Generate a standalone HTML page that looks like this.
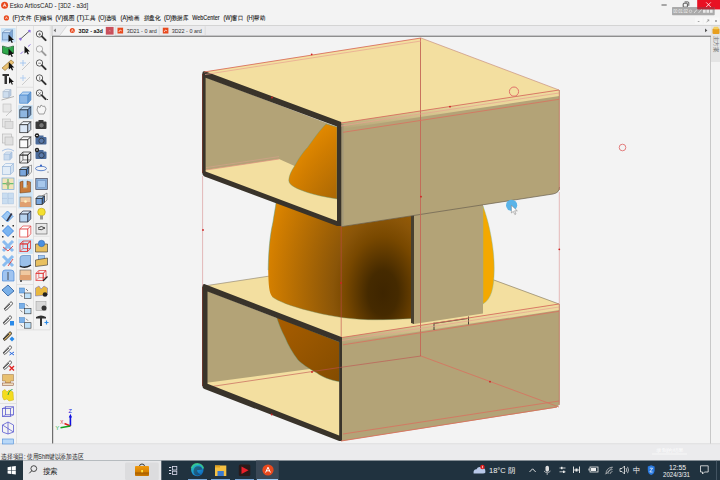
<!DOCTYPE html>
<html><head><meta charset="utf-8"><title>ArtiosCAD</title>
<style>
html,body{margin:0;padding:0;width:720px;height:480px;overflow:hidden;background:#F3F3F3;}
svg{position:absolute;left:0;top:0;font-family:"Liberation Sans",sans-serif;}
</style></head><body>
<svg width="720" height="480" viewBox="0 0 720 480">
<rect x="0" y="0" width="720" height="25" fill="#F3F3F3"/>
<rect x="0" y="25" width="720" height="1" fill="#D4D4D4"/>
<rect x="52" y="26" width="659" height="10" fill="#EBEBED"/>
<rect x="52" y="35" width="659" height="1" fill="#C4C4C6"/>
<rect x="52" y="36" width="659" height="1" fill="#8E8E8E"/>
<rect x="0" y="26" width="52" height="419" fill="#F3F3F3"/>
<rect x="53" y="37" width="657" height="407" fill="#F3F3F3"/>
<rect x="52" y="36" width="1.2" height="408" fill="#6E6E6E"/>
<rect x="710" y="37" width="1" height="407" fill="#C8C8C8"/>
<rect x="711" y="26" width="9" height="418" fill="#F3F3F3"/>
<rect x="711" y="26" width="9" height="36" fill="#E4E4E4"/>
<rect x="0" y="444" width="720" height="17" fill="#EBEBED"/>
<rect x="0" y="443.4" width="720" height="0.8" fill="#D9D9DB"/>
<text x="656" y="451.5" font-size="5" fill="#FFFFFF" opacity="0.9" textLength="28" lengthAdjust="spacingAndGlyphs">录制的结果</text>
<rect x="652" y="453.5" width="35" height="1" fill="#FFFFFF" opacity="0.6"/>
<rect x="0" y="460.5" width="720" height="19.5" fill="#20323F"/>
<defs>
<radialGradient id="egg" gradientUnits="userSpaceOnUse" cx="383" cy="293" r="125" gradientTransform="translate(383 293) scale(1 1.5) translate(-383 -293)">
<stop offset="0" stop-color="#3E2500"/>
<stop offset="0.12" stop-color="#452A00"/>
<stop offset="0.3" stop-color="#784800"/>
<stop offset="0.4" stop-color="#8A5508"/>
<stop offset="0.9" stop-color="#D27E00"/>
<stop offset="1" stop-color="#E08800"/>
</radialGradient>
<linearGradient id="egg4" gradientUnits="userSpaceOnUse" x1="276" y1="318" x2="339" y2="380"><stop offset="0" stop-color="#A85D00"/><stop offset="0.4" stop-color="#9A5700"/><stop offset="1" stop-color="#844C00"/></linearGradient>
<linearGradient id="topedge" x1="0" y1="0" x2="0" y2="1">
<stop offset="0" stop-color="#F3DFA0"/><stop offset="0.4" stop-color="#EBD89C"/><stop offset="1" stop-color="#B3A377"/>
</linearGradient>
</defs>
<polygon points="203,286 421,253 559.5,304 342,337.5" fill="#F3DFA0" />
<line x1="204" y1="286" x2="421" y2="253" stroke="#8A8070" stroke-width="0.6" />
<line x1="483" y1="276" x2="559" y2="304" stroke="#7A7060" stroke-width="0.6" />
<path d="M276.8,196 L341,220 L414,209 L414,318.5 C395,319.5 380,320 368,319.7 C345,319 325,315 310,311 C290,306 278,301 272.5,297 C269,293 268.5,285 268.2,270 C268.5,250 270,235 273,222 C274.5,212 276,205 276.5,199 Z" fill="url(#egg)" />
<path d="M268.2,270 C268.5,250 270,235 273,222 C274.5,212 276,205 276.5,199" fill="none" stroke="#5E9C84" stroke-width="0.5"/>
<path d="M272.5,297 C278,301 290,306 310,311 C325,315 345,319 368,319.7 C380,320 395,319.5 411,318.5" fill="none" stroke="#6E8A60" stroke-width="0.4"/>
<path d="M483,206 C490,225 494.5,250 494.2,270 C494,288 491.5,299 483,304 Z" fill="#F4A800" stroke="#7CB8A0" stroke-width="0.4"/>
<path d="M342,337.5 L559.5,304 L559.5,402 Q559.5,407.5 554,408 L342,441 Z" fill="#B3A377" />
<polygon points="342,337.5 559.5,304 559.5,310 342,343.5" fill="url(#topedge)" opacity="0.95"/>
<polygon points="205,290 339.5,342 339.5,437 205,384" fill="#B3A377" />
<polygon points="205,383 317,368 339.5,365 339.5,437 205,388" fill="#F3DFA0" />
<path d="M276.6,317 L339.5,342 L339.5,381.8 C330,380 322,377 317,373 C308,368 302,364 298,360 C292,352 288,345 285,337.5 C281,330 278.5,323 276.6,317 Z" fill="url(#egg4)" stroke="#5E9C84" stroke-width="0.4"/>
<line x1="205" y1="387.5" x2="339.5" y2="367.5" stroke="#C05050" stroke-width="0.6" />
<path d="M204.3,284 L342,337.3 L342,441 L339.2,441 L204.5,389 Q202.3,388 202.3,385.5 L202.3,287 Q202.3,284 204.3,284 Z M207.5,291.5 L207.5,383.8 L339.2,435.5 L339.2,342 Z" fill="#39332A" fill-rule="evenodd"/>
<polygon points="414,212 483,201 483,313.6 414,324" fill="#B3A377" />
<polygon points="411,213 414,212 414,324 411,323" fill="#48402F" />
<path d="M434,322.6 L434,330 M433.5,323.5 L467.5,318.5 M468.5,316.5 L468.5,324.5" stroke="#222" stroke-width="0.8" fill="none"/>
<polygon points="203,72 421,38 559,90 341,123" fill="#F3DFA0" />
<path d="M341,123 L559.5,90 L559.5,187 Q559.5,192.8 553,194 L341,226.7 Z" fill="#B3A377" />
<polygon points="341,123 559.5,90 559.5,96 341,129" fill="url(#topedge)" opacity="0.95"/>
<path d="M341,226.7 L553,194 Q559.5,192.8 559.5,187" fill="none" stroke="#6A6050" stroke-width="0.7"/>
<polygon points="341.3,124 343.6,124 343.6,226 341.3,226" fill="#A39878" />
<polygon points="205,77 337,127 337,221 205,172" fill="#B3A377" />
<polygon points="205,170 279,159 337,185 337,222 205,173" fill="#F3DFA0" />
<line x1="206" y1="170" x2="279" y2="159" stroke="#E09080" stroke-width="0.7" />
<line x1="206" y1="167.6" x2="279" y2="156.6" stroke="#E0A090" stroke-width="0.5" />
<path d="M326,124 L337,127 L337,199 C325,197 315,195 307.5,192.5 C298,189 289,186 288.8,180.4 C289,175 292,170 294.4,166.3 C300,156 305,150 307.5,147.5 C315,137 320,130 326,124 Z" fill="url(#egg)" stroke="#5E9C84" stroke-width="0.4"/>
<path d="M204.3,71 L341.3,122 L341.3,226 L337,226 L204.5,176.5 Q202.3,175.5 202.3,173 L202.3,73.5 Q202.3,71 204.3,71 Z M205.6,77.8 L205.6,171.5 L337,221 L337,126.6 Z" fill="#39332A" fill-rule="evenodd"/>
<line x1="202.5" y1="287" x2="202.5" y2="386" stroke="#6A2A20" stroke-width="0.8" />
<line x1="202.5" y1="74" x2="202.5" y2="173" stroke="#6A2A20" stroke-width="0.8" />
<line x1="202.6" y1="176" x2="202.6" y2="286" stroke="#D89090" stroke-width="0.6" />
<line x1="341.2" y1="226" x2="341.2" y2="337" stroke="#C04848" stroke-width="0.6" />
<line x1="420.5" y1="38" x2="420.5" y2="356" stroke="#C46656" stroke-width="0.9" />
<line x1="559.3" y1="192" x2="559.3" y2="304" stroke="#D89090" stroke-width="0.6" />
<line x1="204" y1="72" x2="421" y2="38" stroke="#D9705E" stroke-width="0.9" />
<line x1="205" y1="74.5" x2="421" y2="41" stroke="#E8A090" stroke-width="0.7" />
<line x1="341" y1="123" x2="559" y2="90" stroke="#D9705E" stroke-width="0.9" />
<line x1="341" y1="126" x2="559" y2="93" stroke="#E8A090" stroke-width="0.7" />
<line x1="343" y1="132.3" x2="559" y2="99.3" stroke="#D9705E" stroke-width="0.8" />
<line x1="421" y1="38" x2="559" y2="90" stroke="#C89080" stroke-width="0.7" />
<line x1="559.3" y1="90" x2="559.3" y2="190" stroke="#C07060" stroke-width="0.8" />
<line x1="342" y1="337.5" x2="559" y2="304" stroke="#D9705E" stroke-width="0.9" />
<line x1="342" y1="340.5" x2="559" y2="307" stroke="#E8A090" stroke-width="0.7" />
<line x1="343" y1="344.8" x2="559" y2="311.3" stroke="#D9705E" stroke-width="0.8" />
<line x1="343" y1="434" x2="559" y2="401" stroke="#D9705E" stroke-width="0.8" />
<line x1="341" y1="441" x2="557" y2="407" stroke="#D9705E" stroke-width="0.9" />
<line x1="421" y1="356" x2="559" y2="407" stroke="#D9705E" stroke-width="0.8" />
<line x1="339.5" y1="367.5" x2="421" y2="356" stroke="#C05050" stroke-width="0.6" />
<line x1="559.3" y1="304" x2="559.3" y2="405" stroke="#C07060" stroke-width="0.8" />
<circle cx="272" cy="97.5" r="0.9" fill="#D02020"/>
<circle cx="311.7" cy="54.3" r="0.9" fill="#D02020"/>
<circle cx="450" cy="106.7" r="0.9" fill="#D02020"/>
<circle cx="421" cy="196.7" r="0.9" fill="#D02020"/>
<circle cx="559.3" cy="249.3" r="0.9" fill="#D02020"/>
<circle cx="203" cy="230" r="0.9" fill="#D02020"/>
<circle cx="341" cy="283" r="0.9" fill="#D02020"/>
<circle cx="312" cy="372" r="0.9" fill="#D02020"/>
<circle cx="490" cy="381.7" r="0.9" fill="#D02020"/>
<circle cx="271.7" cy="414.5" r="0.9" fill="#D02020"/>
<circle cx="514" cy="91.6" r="4.6" fill="none" stroke="#E0706A" stroke-width="1"/>
<circle cx="622.5" cy="147.5" r="3.3" fill="none" stroke="#E07070" stroke-width="0.9"/>
<circle cx="511.6" cy="205.3" r="5.6" fill="#5BB4E8"/>
<path d="M511.4,205.3 L511.4,213 L513.3,211.3 L514.8,214.5 L516,214 L514.6,210.8 L517.3,210.8 Z" fill="#FFFFFF" stroke="#777" stroke-width="0.5"/>
<path d="M70.4,426 L70.4,416" stroke="#1010E0" stroke-width="1.6"/><path d="M68.8,417.5 L70.4,413.8 L72,417.5 Z" fill="#1010E0"/>
<path d="M70.4,426 L64.5,423.5" stroke="#E02020" stroke-width="1.6"/>
<path d="M70.4,426 L60.5,427.8" stroke="#10A020" stroke-width="1.6"/>
<text x="70.2" y="413.2" font-size="5.5" fill="#2020E0" text-anchor="middle">Z</text>
<text x="61.8" y="424.3" font-size="5" fill="#E04040" text-anchor="middle">X</text>
<text x="57.3" y="430.3" font-size="5.5" fill="#20B040" text-anchor="middle">Y</text>
<circle cx="4.6" cy="5.3" r="3.5" fill="#E8491D"/>
<path d="M3.2,6.8 L4.6,3.6 L6,6.8 M3.8,5.6 L5.4,5.6" stroke="#fff" stroke-width="0.8" fill="none"/>
<text x="9.7" y="8.1" font-size="7" fill="#1E1E1E" font-weight="normal" text-anchor="start" textLength="78.5" lengthAdjust="spacingAndGlyphs" >Esko ArtiosCAD - [3D2 - a3d]</text>
<rect x="661.5" y="4.6" width="5.2" height="0.8" fill="#333"/>
<rect x="683.2" y="3.2" width="4.2" height="4" rx="0.8" fill="none" stroke="#222" stroke-width="0.75"/>
<path d="M684.6,1.9 L687.8,1.9 Q688.8,1.9 688.8,2.9 L688.8,5.8" fill="none" stroke="#222" stroke-width="0.7"/>
<rect x="697.2" y="0" width="22.8" height="9.4" fill="#E81123"/>
<path d="M706.2,2.4 L710.8,7 M710.8,2.4 L706.2,7" stroke="#fff" stroke-width="0.8"/>
<rect x="672" y="7" width="42.7" height="8.3" rx="0.8" fill="#A4A4A4" opacity="0.92"/>
<rect x="697.2" y="7" width="17.5" height="2.4" fill="#B81828" opacity="0.85"/>
<text x="673.3" y="13.2" font-size="4.6" fill="#F4F4F4" font-weight="normal" text-anchor="start" textLength="14.5" lengthAdjust="spacingAndGlyphs" >00:01:02</text>
<circle cx="690.5" cy="11.3" r="1.3" fill="none" stroke="#F4F4F4" stroke-width="0.5"/>
<path d="M694,13 L697,9.5 M698.5,13 L701.5,9.5" stroke="#F4F4F4" stroke-width="0.7"/>
<rect x="703" y="9.8" width="2.6" height="3" fill="#E8E8E8"/><rect x="706.5" y="9.8" width="2.6" height="3" fill="#E8E8E8"/><rect x="710" y="9.8" width="2.6" height="3" fill="#E8E8E8"/>
<rect x="695" y="17.6" width="7.5" height="6.4" fill="#F7F7F7"/>
<rect x="704" y="17.6" width="7.5" height="6.4" fill="#F7F7F7"/>
<rect x="712" y="17.6" width="7.5" height="6.4" fill="#F7F7F7"/>
<rect x="697.8" y="21.3" width="1.6" height="0.5" fill="#555"/>
<path d="M706.6,22.3 L708.8,19.8 M707.3,19.8 L708.8,19.8 L708.8,21.3" stroke="#666" stroke-width="0.5" fill="none"/>
<path d="M715,20 L717,22 M717,20 L715,22" stroke="#666" stroke-width="0.5"/>
<circle cx="6.4" cy="17.9" r="2.6" fill="#E8491D"/>
<path d="M5.4,19 L6.4,16.8 L7.4,19" stroke="#fff" stroke-width="0.6" fill="none"/>
<text x="12.6" y="20.4" font-size="6.3" fill="#202020" font-weight="normal" text-anchor="start" textLength="18.5" lengthAdjust="spacingAndGlyphs" stroke="#202020" stroke-width="0.12">(F)文件</text>
<text x="34" y="20.4" font-size="6.3" fill="#202020" font-weight="normal" text-anchor="start" textLength="18" lengthAdjust="spacingAndGlyphs" stroke="#202020" stroke-width="0.12">(E)编辑</text>
<text x="55.4" y="20.4" font-size="6.3" fill="#202020" font-weight="normal" text-anchor="start" textLength="18.6" lengthAdjust="spacingAndGlyphs" stroke="#202020" stroke-width="0.12">(V)视图</text>
<text x="76.8" y="20.4" font-size="6.3" fill="#202020" font-weight="normal" text-anchor="start" textLength="18.5" lengthAdjust="spacingAndGlyphs" stroke="#202020" stroke-width="0.12">(T)工具</text>
<text x="98.2" y="20.4" font-size="6.3" fill="#202020" font-weight="normal" text-anchor="start" textLength="18.5" lengthAdjust="spacingAndGlyphs" stroke="#202020" stroke-width="0.12">(O)选项</text>
<text x="120.6" y="20.4" font-size="6.3" fill="#202020" font-weight="normal" text-anchor="start" textLength="18.4" lengthAdjust="spacingAndGlyphs" stroke="#202020" stroke-width="0.12">(A)动画</text>
<text x="143.6" y="20.4" font-size="6.3" fill="#202020" font-weight="normal" text-anchor="start" textLength="16.6" lengthAdjust="spacingAndGlyphs" stroke="#202020" stroke-width="0.12">拼盘化</text>
<text x="164" y="20.4" font-size="6.3" fill="#202020" font-weight="normal" text-anchor="start" textLength="24.4" lengthAdjust="spacingAndGlyphs" stroke="#202020" stroke-width="0.12">(D)数据库</text>
<text x="192.3" y="20.4" font-size="6.3" fill="#202020" font-weight="normal" text-anchor="start" textLength="27.2" lengthAdjust="spacingAndGlyphs" stroke="#202020" stroke-width="0.12">WebCenter</text>
<text x="223.4" y="20.4" font-size="6.3" fill="#202020" font-weight="normal" text-anchor="start" textLength="19.4" lengthAdjust="spacingAndGlyphs" stroke="#202020" stroke-width="0.12">(W)窗口</text>
<text x="246.7" y="20.4" font-size="6.3" fill="#202020" font-weight="normal" text-anchor="start" textLength="18.5" lengthAdjust="spacingAndGlyphs" stroke="#202020" stroke-width="0.12">(H)帮助</text>
<rect x="51.6" y="26" width="0.8" height="10" fill="#B8B8B8"/>
<path d="M55.8,28.6 L53.6,30.4 L55.8,32.2 Z" fill="#666"/>
<path d="M59.7,35.5 L66.5,26.3 L114.5,26.3 L114.5,35.5 Z" fill="#F6F6F6"/>
<path d="M59.7,35.5 L66.5,26.3" stroke="#C8C8C8" stroke-width="0.6"/>
<circle cx="72.3" cy="30.6" r="2.5" fill="#E8491D"/>
<path d="M71.3,31.8 L72.3,29.4 L73.3,31.8" stroke="#fff" stroke-width="0.6" fill="none"/>
<text x="78.6" y="32.9" font-size="5.6" fill="#111" font-weight="bold" text-anchor="start" textLength="24.3" lengthAdjust="spacingAndGlyphs" >3D2 - a3d</text>
<rect x="105.8" y="26.9" width="7.8" height="7.7" fill="#C9505C"/>
<path d="M109,30.1 L110.4,31.5 M110.4,30.1 L109,31.5" stroke="#F0B0B0" stroke-width="0.4"/>
<rect x="114.8" y="26.3" width="0.6" height="9.2" fill="#D0D0D0"/>
<rect x="117.5" y="27.7" width="5.6" height="5.8" fill="#E8491D"/>
<path d="M118.8,32 L120.2,30 L121.8,31" stroke="#fff" stroke-width="0.7" fill="none"/>
<text x="126.7" y="32.9" font-size="5.6" fill="#333" font-weight="normal" text-anchor="start" textLength="30" lengthAdjust="spacingAndGlyphs" >3D21 - 0 ard</text>
<rect x="158.8" y="26.3" width="0.6" height="9.2" fill="#D0D0D0"/>
<rect x="162.8" y="27.7" width="5.6" height="5.8" fill="#E8491D"/>
<path d="M164.1,32 L165.5,30 L167.1,31" stroke="#fff" stroke-width="0.7" fill="none"/>
<text x="171.7" y="32.9" font-size="5.6" fill="#333" font-weight="normal" text-anchor="start" textLength="30" lengthAdjust="spacingAndGlyphs" >3D22 - 0 ard</text>
<rect x="204.8" y="26.3" width="0.6" height="9.2" fill="#D0D0D0"/>
<path d="M705,28.6 L707.4,30.4 L705,32.2 Z" fill="#555"/>
<rect x="712.5" y="28.5" width="7" height="5.5" rx="1" fill="#E8A020"/>
<rect x="713.5" y="26.8" width="5" height="2.5" rx="1" fill="#F4D060"/>
<text x="0" y="0" font-size="5.8" fill="#6A6A6A" transform="translate(713.6 35.5) rotate(90)" textLength="17" lengthAdjust="spacingAndGlyphs">主方案</text>
<text x="1.1" y="459.4" font-size="6.6" fill="#222" font-weight="normal" text-anchor="start" textLength="82.2" lengthAdjust="spacingAndGlyphs" >选择项目: 使用Shift键以添加选区</text>
<rect x="16" y="26" width="0.8" height="418" fill="#DCDCDC"/>
<rect x="33.2" y="26" width="0.8" height="304" fill="#DCDCDC"/>
<rect x="49.8" y="26" width="0.8" height="304" fill="#DCDCDC"/>
<rect x="17" y="86.8" width="16" height="0.8" fill="#DCDCDC"/>
<rect x="0" y="206.5" width="16" height="0.8" fill="#DCDCDC"/>
<rect x="33.5" y="235.8" width="16" height="0.8" fill="#DCDCDC"/>
<rect x="17" y="284" width="16" height="0.8" fill="#DCDCDC"/>
<rect x="17" y="329.5" width="33" height="0.8" fill="#DCDCDC"/>
<rect x="0" y="403" width="16" height="0.8" fill="#DCDCDC"/>
<rect x="1" y="28" width="14.5" height="14.3" fill="#CCE4F7"/>
<path d="M2.5,32.8 L5.300000000000001,30 L12.5,30 L9.7,32.8 Z" fill="#D8E8F8" stroke="#6A8CB8" stroke-width="0.7"/><path d="M9.7,32.8 L12.5,30 L12.5,37.2 L9.7,40 Z" fill="#7FA8D8" stroke="#6A8CB8" stroke-width="0.7"/><rect x="2.5" y="32.8" width="7.199999999999999" height="7.199999999999999" fill="#A8CAEE" stroke="#6A8CB8" stroke-width="0.7"/>
<path d="M8.5,34.5 L8.5,42.1 L10.4,40.485 L11.73,43.05 L12.87,42.48 L11.635,40.01 L14.01,40.01 Z" fill="#111"/>
<path d="M2.5,46 Q8,49 13.5,46 L13.5,53 Q8,56 2.5,53 Z" fill="#2EA84A" stroke="#1A5A2A" stroke-width="0.7"/>
<path d="M8.5,48.5 L8.5,56.1 L10.4,54.485 L11.73,57.05 L12.87,56.48 L11.635,54.01 L14.01,54.01 Z" fill="#111"/>
<path d="M2,68 L11,60 L14,62.5 L5,70.5 Z" fill="#E8C070" stroke="#8A6A30" stroke-width="0.6"/>
<path d="M8.8,62 L8.8,69.6 L10.700000000000001,67.985 L12.030000000000001,70.55 L13.17,69.98 L11.935,67.51 L14.31,67.51 Z" fill="#111"/>
<path d="M2.5,74 L9,74 L9,76 L7,76 L7,84 L4.5,84 L4.5,76 L2.5,76 Z" fill="#333"/>
<path d="M9,77 L9,83.8 L10.7,82.355 L11.89,84.65 L12.91,84.14 L11.805,81.93 L13.93,81.93 Z" fill="#111"/>
<g opacity="0.5"><path d="M3,91.74 L5.24,89.5 L11,89.5 L8.76,91.74 Z" fill="#D4E6F8" stroke="#6A8AB0" stroke-width="0.7"/><path d="M8.76,91.74 L11,89.5 L11,95.26 L8.76,97.5 Z" fill="#7FA6D6" stroke="#6A8AB0" stroke-width="0.7"/><rect x="3" y="91.74" width="5.76" height="5.76" fill="#A9C8EA" stroke="#6A8AB0" stroke-width="0.7"/></g><path d="M1.5,100 L14,96.5" stroke="#888" stroke-width="0.6"/>
<g opacity="0.5"><rect x="3" y="104" width="8" height="8" fill="#DDD" stroke="#888" stroke-width="0.6"/><path d="M6,116 L12,110" stroke="#666" stroke-width="0.6"/></g>
<g opacity="0.5"><rect x="2.5" y="119" width="8" height="8" fill="#DDD" stroke="#888" stroke-width="0.6"/><rect x="5" y="121.5" width="8" height="7" fill="#CCC" stroke="#888" stroke-width="0.6"/></g>
<g opacity="0.6"><rect x="2.5" y="134" width="9" height="9" fill="#E4E4E4" stroke="#888" stroke-width="0.6"/><rect x="5" y="137" width="8" height="8" fill="#D4D4D4" stroke="#888" stroke-width="0.6"/></g>
<g opacity="0.55"><path d="M4,154.24 L6.24,152 L12,152 L9.76,154.24 Z" fill="#D4E6F8" stroke="#6A9AD0" stroke-width="0.7"/><path d="M9.76,154.24 L12,152 L12,157.76 L9.76,160 Z" fill="#7FA6D6" stroke="#6A9AD0" stroke-width="0.7"/><rect x="4" y="154.24" width="5.76" height="5.76" fill="#A9C8EA" stroke="#6A9AD0" stroke-width="0.7"/><path d="M2,151 Q8,147 14,151" fill="none" stroke="#3A7AD0" stroke-width="0.7"/></g>
<g opacity="0.6"><path d="M2.5,166.58 L5.58,163.5 L13.5,163.5 L10.42,166.58 Z" fill="#E8F2FC" stroke="#6A9AD0" stroke-width="0.7"/><path d="M10.42,166.58 L13.5,163.5 L13.5,171.42 L10.42,174.5 Z" fill="#BCD4EE" stroke="#6A9AD0" stroke-width="0.7"/><rect x="2.5" y="166.58" width="7.92" height="7.92" fill="#D8E8F8" stroke="#6A9AD0" stroke-width="0.7"/></g>
<rect x="2" y="178" width="12" height="11.5" fill="#F2E4B8" stroke="#7AAAD8" stroke-width="0.7"/><path d="M8,179 L8,189 M2.5,183.7 L13.5,183.7" stroke="#6AC070" stroke-width="1.3"/><circle cx="8" cy="183.7" r="2" fill="#A0B080"/>
<g opacity="0.7"><rect x="2.5" y="193" width="5.2" height="5.2" fill="#B8D4F0" stroke="#8AB0DA" stroke-width="0.5"/><rect x="8.3" y="193" width="5.2" height="5.2" fill="#B8D4F0" stroke="#8AB0DA" stroke-width="0.5"/><rect x="2.5" y="198.7" width="5.2" height="5.2" fill="#B8D4F0" stroke="#8AB0DA" stroke-width="0.5"/><rect x="8.3" y="198.7" width="5.2" height="5.2" fill="#B8D4F0" stroke="#8AB0DA" stroke-width="0.5"/></g>
<path d="M7.5,211.0 L13.0,216.5 L7.5,222.0 L2.0,216.5 Z" fill="#9CC8F4" stroke="#4A90E0" stroke-width="0.9"/><path d="M6,221 L11,213 L12.5,214 L8,221 Z" fill="#334"/>
<path d="M8,225.5 L13.5,231 L8,236.5 L2.5,231 Z" fill="#7AB4F0" stroke="#3A80E0" stroke-width="0.9"/><rect x="2" y="225" width="1.5" height="1.5" fill="#333"/><rect x="12.5" y="225" width="1.5" height="1.5" fill="#333"/><rect x="2" y="236" width="1.5" height="1.5" fill="#333"/><rect x="12.5" y="236" width="1.5" height="1.5" fill="#333"/>
<path d="M3,241 L13,251 M13,241 L3,251" stroke="#8ABCF0" stroke-width="3"/><path d="M3,247 L8,251 L13,246" fill="none" stroke="#E04040" stroke-width="0.9"/>
<path d="M3,256 L13,266 M13,256 L3,266" stroke="#8ABCF0" stroke-width="3"/><path d="M8,266 L13,259" fill="none" stroke="#E04040" stroke-width="0.9"/>
<path d="M2.5,281 L2.5,273 Q2.5,270 5,270 L11,270 Q14,270 14,273 L14,281 Z" fill="#A0C4F0" stroke="#4A8AD8" stroke-width="0.7"/><path d="M8,272 L8,280" stroke="#333" stroke-width="0.8"/>
<path d="M2,290 L8,285 L14,291 L8,296 Z" fill="#7AB0E8" stroke="#2A5A9A" stroke-width="0.8"/>
<path d="M4,309 L10,302.5 C11.5,301 13.5,303 12,304.5 L6.5,310 C5.5,311 4,310 5,308.8 L10,304" fill="none" stroke="#555" stroke-width="1"/>
<path d="M3,323 L9,316.5 C10.5,315 12.5,317 11,318.5 L5.5,324 C4.5,325 3,324 4,322.8 L9,318" fill="none" stroke="#555" stroke-width="1"/><rect x="10" y="321" width="4" height="4.5" fill="#2A8AE8"/>
<path d="M3,339 L9,332.5 C10.5,331 12.5,333 11,334.5 L5.5,340 C4.5,341 3,340 4,338.8 L9,334" fill="#D8B060" stroke="#333" stroke-width="1"/><path d="M12,336.5 L14.5,339 L12,341.5 L9.5,339 Z" fill="#2A8AE8"/>
<path d="M3,353 L9,346.5 C10.5,345 12.5,347 11,348.5 L5.5,354 C4.5,355 3,354 4,352.8 L9,348" fill="none" stroke="#555" stroke-width="1"/><path d="M9.5,352 L14,355 M14,352 L9.5,355" stroke="#2A6AE0" stroke-width="1"/>
<path d="M3,368 L9,361.5 C10.5,360 12.5,362 11,363.5 L5.5,369 C4.5,370 3,369 4,367.8 L9,363" fill="none" stroke="#555" stroke-width="1"/><path d="M9.5,366 L14,370.5 M14,366 L9.5,370.5" stroke="#E02020" stroke-width="1.3"/>
<path d="M2.5,374.5 L13.5,374.5 L13.5,381 L10.5,381 L10.5,383 L5.5,383 L5.5,381 L2.5,381 Z" fill="#E8C070" stroke="#9A7040" stroke-width="0.5"/><rect x="2.5" y="383" width="11" height="2.5" fill="#F0E0C0" stroke="#8A4A30" stroke-width="0.5"/>
<path d="M2.5,391 L5,389.5 L7,392 L9,390 L13,392 L13.5,400 L9,401 L7,399 L4,400 L2.5,397 Z" fill="#F4DC20" stroke="#C8B010" stroke-width="0.5"/><path d="M8,395 Q9,390 12.5,389.5" fill="none" stroke="#20A040" stroke-width="0.9"/>
<rect x="2.5" y="408.5" width="8" height="8" fill="none" stroke="#5A5AD0" stroke-width="0.8"/><rect x="5.5" y="406.8" width="8" height="8" fill="none" stroke="#5A5AD0" stroke-width="0.8"/><path d="M2.5,408.5 L5.5,406.8 M10.5,408.5 L13.5,406.8 M2.5,416.5 L5.5,414.8 M10.5,416.5 L13.5,414.8" stroke="#5A5AD0" stroke-width="0.6"/>
<path d="M2.5,425 L8,422 L13.5,425 L13.5,432 L8,434 L2.5,432 Z M2.5,425 L13.5,432 M8,422 L8,434" fill="none" stroke="#5A5AD0" stroke-width="0.8"/>
<rect x="2.5" y="439" width="11" height="5" fill="#B8D8F8" stroke="#4A8AD8" stroke-width="0.6"/>
<path d="M20.5,39 L29.5,31" stroke="#333" stroke-width="0.8"/><circle cx="20.5" cy="39" r="1.2" fill="#8A6AE0"/><circle cx="29.5" cy="31" r="1.2" fill="#8A6AE0"/><path d="M19,38 L21,41 M28,30 L30.5,32.5" stroke="#9A7AE8" stroke-width="0.6"/>
<path d="M20.5,54 L23,51.5 M28,46.5 L30.5,44.5" stroke="#8A6AE0" stroke-width="0.9"/><path d="M24.5,46 L24.5,53.6 L26.4,51.985 L27.73,54.55 L28.869999999999997,53.98 L27.634999999999998,51.51 L30.009999999999998,51.51 Z" fill="#111"/>
<g opacity="0.6"><path d="M23,60 L23,66 M20,63 L26,63" stroke="#5AA0F0" stroke-width="0.8"/><path d="M22,70 L30,62" stroke="#888" stroke-width="0.7"/></g>
<g opacity="0.5"><path d="M23,75 L23,81 M20,78 L26,78" stroke="#5AA0F0" stroke-width="0.8"/><path d="M22,85 L30,77" stroke="#888" stroke-width="0.7"/></g>
<path d="M19.7,95.136 L22.836,92 L30.9,92 L27.764,95.136 Z" fill="#BCD8F4" stroke="#4A8AD0" stroke-width="0.7"/><path d="M27.764,95.136 L30.9,92 L30.9,100.064 L27.764,103.2 Z" fill="#6A9ACC" stroke="#4A8AD0" stroke-width="0.7"/><rect x="19.7" y="95.136" width="8.064" height="8.064" fill="#8EB8E6" stroke="#4A8AD0" stroke-width="0.7"/>
<rect x="18.3" y="105.1" width="14.5" height="14.1" fill="#CCE4F7"/>
<path d="M19.8,109.88 L22.880000000000003,106.8 L30.8,106.8 L27.72,109.88 Z" fill="#C4DCF2" stroke="#1F2A38" stroke-width="0.7"/><path d="M27.72,109.88 L30.8,106.8 L30.8,114.72 L27.72,117.8 Z" fill="#6A92C4" stroke="#1F2A38" stroke-width="0.7"/><rect x="19.8" y="109.88" width="7.92" height="7.92" fill="#8EB6E0" stroke="#1F2A38" stroke-width="0.7"/>
<path d="M19.8,124.78 L22.880000000000003,121.7 L30.8,121.7 L27.72,124.78 Z" fill="#F0F6FC" stroke="#222" stroke-width="0.7"/><path d="M27.72,124.78 L30.8,121.7 L30.8,129.62 L27.72,132.7 Z" fill="#C8D8EC" stroke="#222" stroke-width="0.7"/><rect x="19.8" y="124.78" width="7.92" height="7.92" fill="#DCE8F6" stroke="#222" stroke-width="0.7"/>
<path d="M19.8,139.88000000000002 L22.880000000000003,136.8 L30.8,136.8 L27.72,139.88000000000002 Z" fill="#FAFAFA" stroke="#222" stroke-width="0.7"/><path d="M27.72,139.88000000000002 L30.8,136.8 L30.8,144.72 L27.72,147.8 Z" fill="#F0F0F0" stroke="#222" stroke-width="0.7"/><rect x="19.8" y="139.88000000000002" width="7.92" height="7.92" fill="#FAFAFA" stroke="#222" stroke-width="0.7"/>
<path d="M19.8,155.08 L22.880000000000003,152 L30.8,152 L27.72,155.08 Z" fill="none" stroke="#222" stroke-width="0.7"/><path d="M27.72,155.08 L30.8,152 L30.8,159.92 L27.72,163 Z" fill="none" stroke="#222" stroke-width="0.7"/><rect x="19.8" y="155.08" width="7.92" height="7.92" fill="none" stroke="#222" stroke-width="0.7"/><path d="M22.880000000000003,152 L22.880000000000003,159.92 L19.8,163 M22.880000000000003,159.92 L30.8,159.92" fill="none" stroke="#222" stroke-width="0.5599999999999999"/>
<path d="M19.8,169.52 L22.32,167 L28.8,167 L26.28,169.52 Z" fill="#B0D0F0" stroke="#222" stroke-width="0.7"/><path d="M26.28,169.52 L28.8,167 L28.8,173.48 L26.28,176 Z" fill="#4A7AB8" stroke="#222" stroke-width="0.7"/><rect x="19.8" y="169.52" width="6.4799999999999995" height="6.4799999999999995" fill="#7AA6DC" stroke="#222" stroke-width="0.7"/><path d="M27,167 L31.5,165 L31.5,172 L28,176" fill="none" stroke="#555" stroke-width="0.5"/>
<rect x="18.3" y="179.2" width="14.5" height="29.2" fill="#CCE4F7"/>
<path d="M20,182 L23,181 L23,188 L27,188 L27,181 L30.5,182 L30.5,192 L20,193 Z" fill="#C87A3A" stroke="#6A3A10" stroke-width="0.5"/><path d="M23,188 L27,188 L27,185" stroke="#F0C070" stroke-width="0.8" fill="none"/>
<rect x="20" y="197" width="11" height="9.8" fill="#F0C8A0" stroke="#555" stroke-width="0.5"/><rect x="20" y="202" width="11" height="4.8" fill="#E0A070"/><circle cx="25.5" cy="201.5" r="1.3" fill="#FFF4C0"/>
<path d="M19.8,214.08 L22.880000000000003,211 L30.8,211 L27.72,214.08 Z" fill="#D8E8F8" stroke="#223" stroke-width="0.7"/><path d="M27.72,214.08 L30.8,211 L30.8,218.92 L27.72,222 Z" fill="#90B4DC" stroke="#223" stroke-width="0.7"/><rect x="19.8" y="214.08" width="7.92" height="7.92" fill="#B8D4F0" stroke="#223" stroke-width="0.7"/>
<path d="M19.8,229.08 L22.880000000000003,226 L30.8,226 L27.72,229.08 Z" fill="#FFFFFF" stroke="#E04040" stroke-width="0.7"/><path d="M27.72,229.08 L30.8,226 L30.8,233.92 L27.72,237 Z" fill="#FFF4F4" stroke="#E04040" stroke-width="0.7"/><rect x="19.8" y="229.08" width="7.92" height="7.92" fill="#FFFFFF" stroke="#E04040" stroke-width="0.7"/>
<rect x="18.3" y="239" width="14.5" height="14.9" fill="#CCE4F7"/>
<path d="M20,243.94 L22.94,241 L30.5,241 L27.56,243.94 Z" fill="none" stroke="#E03030" stroke-width="0.8"/><path d="M27.56,243.94 L30.5,241 L30.5,248.56 L27.56,251.5 Z" fill="none" stroke="#E03030" stroke-width="0.8"/><rect x="20" y="243.94" width="7.56" height="7.56" fill="none" stroke="#E03030" stroke-width="0.8"/><path d="M22.94,241 L22.94,248.56 L20,251.5 M22.94,248.56 L30.5,248.56" fill="none" stroke="#E03030" stroke-width="0.6400000000000001"/>
<path d="M20,258 Q20,255.5 23,255.5 L30.5,255.5 L30.5,264 Q30.5,267 27.5,267 L20,267 Z" fill="#9AC0EA" stroke="#4A7AB8" stroke-width="0.6"/><path d="M20,266 Q25,269 31,265" stroke="#222" stroke-width="1.4" fill="none"/>
<rect x="20" y="270" width="11" height="10" fill="#F0C8A0" stroke="#666" stroke-width="0.6"/><rect x="20" y="275" width="11" height="5" fill="#E0A070"/><circle cx="21" cy="281" r="1" fill="#333"/>
<rect x="19.5" y="288" width="5" height="5" fill="#7AB0E8" stroke="#3A7AC0" stroke-width="0.5"/><rect x="24.5" y="293" width="6.5" height="5.5" fill="#BFE0F8" stroke="#333" stroke-width="0.6"/><path d="M26,289 L28,291 M20.5,295 L22.5,297" stroke="#333" stroke-width="0.6"/>
<rect x="19.5" y="303.3" width="5" height="5" fill="#7AB0E8" stroke="#3A7AC0" stroke-width="0.5"/><rect x="24.5" y="308.3" width="6.5" height="5.5" fill="#BFE0F8" stroke="#333" stroke-width="0.6"/><path d="M26,304.3 L28,306.3 M20.5,310.3 L22.5,312.3" stroke="#333" stroke-width="0.6"/>
<rect x="19.5" y="317.7" width="5" height="5" fill="#7AB0E8" stroke="#3A7AC0" stroke-width="0.5"/><rect x="24.5" y="322.7" width="6.5" height="5.5" fill="#BFE0F8" stroke="#333" stroke-width="0.6"/><path d="M26,318.7 L28,320.7 M20.5,324.7 L22.5,326.7" stroke="#333" stroke-width="0.6"/>
<g><circle cx="39.5" cy="34.0" r="3.2" fill="#FAFAFA" stroke="#333" stroke-width="0.8"/><path d="M41.9,36.4 L45.6,40.1" stroke="#333" stroke-width="2" stroke-linecap="round"/><path d="M38.2,34.2 L41.2,34.2 M39.7,32.7 L39.7,35.7" stroke="#333" stroke-width="0.6"/></g>
<g opacity="0.55"><circle cx="39.5" cy="49.0" r="3.2" fill="#FAFAFA" stroke="#555" stroke-width="0.8"/><path d="M41.9,51.4 L45.6,55.1" stroke="#555" stroke-width="2" stroke-linecap="round"/></g>
<g><circle cx="39.5" cy="63.0" r="3.2" fill="#FAFAFA" stroke="#333" stroke-width="0.8"/><path d="M41.9,65.4 L45.6,69.1" stroke="#333" stroke-width="2" stroke-linecap="round"/><path d="M38.2,63.2 L41.2,63.2" stroke="#333" stroke-width="0.6"/></g>
<g><circle cx="39.5" cy="78.0" r="3.2" fill="#FAFAFA" stroke="#333" stroke-width="0.8"/><path d="M41.9,80.4 L45.6,84.1" stroke="#333" stroke-width="2" stroke-linecap="round"/><path d="M39.7,76.5 L39.7,80" stroke="#333" stroke-width="0.6"/></g>
<g><circle cx="39.5" cy="93.0" r="3.2" fill="#FAFAFA" stroke="#333" stroke-width="0.8"/><path d="M41.9,95.4 L45.6,99.1" stroke="#333" stroke-width="2" stroke-linecap="round"/><path d="M38.2,92 L41.2,95 M41.2,92 L38.2,95" stroke="#333" stroke-width="0.5"/></g><circle cx="47.5" cy="99.5" r="0.6" fill="#333"/>
<path d="M37,110 L38,106 L40,107.5 L41,105 L43,106.5 L44.5,106 L46,109 L44,114 L39,114 Z" fill="#F6F6F6" stroke="#666" stroke-width="0.6"/>
<rect x="35.5" y="121.5" width="11" height="7.5" rx="1" fill="#3A3A3A"/><rect x="38.5" y="120" width="5" height="2" fill="#3A3A3A"/><circle cx="41.5" cy="125.3" r="2.6" fill="#777" stroke="#222" stroke-width="0.6"/>
<rect x="35.5" y="137.0" width="11" height="7.5" rx="1" fill="#4A6A9A"/><rect x="38.5" y="135.5" width="5" height="2" fill="#4A6A9A"/><circle cx="41.5" cy="140.8" r="2.6" fill="#5A7AAA" stroke="#222" stroke-width="0.6"/><circle cx="37" cy="135.5" r="2.2" fill="#222"/><rect x="36" y="135.1" width="2" height="0.8" fill="#fff"/>
<rect x="35.5" y="151.5" width="11" height="7.5" rx="1" fill="#4A6A9A"/><rect x="38.5" y="150" width="5" height="2" fill="#4A6A9A"/><circle cx="41.5" cy="155.3" r="2.6" fill="#5A7AAA" stroke="#222" stroke-width="0.6"/><circle cx="37" cy="150" r="2.2" fill="#222"/><rect x="36" y="149.6" width="2" height="0.8" fill="#fff"/>
<ellipse cx="41" cy="168.5" rx="5.5" ry="2.2" fill="none" stroke="#3A6AC0" stroke-width="0.8"/><circle cx="41" cy="165.5" r="1" fill="#2A5AC0"/><circle cx="48" cy="172" r="0.5" fill="#333"/>
<rect x="35.8" y="178.6" width="11.5" height="11" fill="#8AB0DC" stroke="#445" stroke-width="0.7"/><rect x="37.8" y="180.6" width="7.5" height="7" fill="#A8C8EC" stroke="#6A8AB8" stroke-width="0.5"/>
<path d="M36,198.38 L38.38,196 L44.5,196 L42.12,198.38 Z" fill="#B0D0F0" stroke="#222" stroke-width="0.7"/><path d="M42.12,198.38 L44.5,196 L44.5,202.12 L42.12,204.5 Z" fill="#4A7AB8" stroke="#222" stroke-width="0.7"/><rect x="36" y="198.38" width="6.119999999999999" height="6.119999999999999" fill="#7AA6DC" stroke="#222" stroke-width="0.7"/><path d="M42,196 L47,193 L47,200 L43,204" fill="none" stroke="#555" stroke-width="0.5"/>
<circle cx="41.5" cy="212" r="3.8" fill="#F4E030" stroke="#B8A010" stroke-width="0.6"/><rect x="40" y="215.5" width="3" height="4" fill="#999"/>
<rect x="36" y="223.5" width="11" height="10.5" fill="#E8E8E8" stroke="#555" stroke-width="0.6"/><path d="M38,228 Q41,225 45,228 Q41,231 38,229" fill="none" stroke="#333" stroke-width="0.9"/>
<path d="M35.5,244 L47.5,244 L47.5,252 L35.5,252 Z" fill="#E8C060" stroke="#333" stroke-width="0.6"/><circle cx="41.5" cy="243.5" r="3.2" fill="#4A90E0" stroke="#2A5AA0" stroke-width="0.5"/>
<rect x="38.5" y="255.6" width="6" height="6" fill="#A0C8F0" stroke="#3A6AB0" stroke-width="0.5"/><path d="M35.5,260 L47.5,258 L47.5,265 L35.5,266.5 Z" fill="#E8C060" stroke="#333" stroke-width="0.6"/>
<path d="M36,273.3 L38.8,270.5 L46,270.5 L43.2,273.3 Z" fill="none" stroke="#E03030" stroke-width="0.7"/><path d="M43.2,273.3 L46,270.5 L46,277.7 L43.2,280.5 Z" fill="none" stroke="#E03030" stroke-width="0.7"/><rect x="36" y="273.3" width="7.199999999999999" height="7.199999999999999" fill="none" stroke="#E03030" stroke-width="0.7"/><path d="M38.8,270.5 L38.8,277.7 L36,280.5 M38.8,277.7 L46,277.7" fill="none" stroke="#E03030" stroke-width="0.5599999999999999"/><path d="M43,281 L47.5,276.5" stroke="#222" stroke-width="1.2"/>
<path d="M35.5,288 L39,286 L41,289 L44,286 L47.5,288 L47.5,295 L35.5,296 Z" fill="#E8B840" stroke="#6A6AC0" stroke-width="0.5"/><circle cx="45" cy="294.5" r="2.3" fill="#222"/>
<rect x="36" y="301.5" width="10" height="9" fill="#D8D8D8" stroke="#999" stroke-width="0.5"/><circle cx="44" cy="308" r="2.5" fill="#333"/>
<path d="M36,317 Q41,314 46,317 L46,318.5 L42,318.5 L42,326 L40,326 L40,318.5 L36,318.5 Z" fill="#333"/><path d="M44.5,322.5 L48.5,322.5 M46.5,320.5 L46.5,324.5" stroke="#2A8AE8" stroke-width="1.2"/>
<rect x="0" y="460.5" width="23" height="19.5" fill="#243540"/>
<path d="M7.6,467.2 L11.3,466.6 L11.3,470 L7.6,470 Z M11.9,466.5 L15.8,465.9 L15.8,470 L11.9,470 Z M7.6,470.6 L11.3,470.6 L11.3,474 L7.6,473.4 Z M11.9,470.6 L15.8,470.6 L15.8,474.6 L11.9,474.1 Z" fill="#FFFFFF"/>
<rect x="23" y="460.5" width="138.3" height="19.5" fill="#E8E8EA"/>
<circle cx="33.8" cy="468.6" r="2.9" fill="none" stroke="#222" stroke-width="0.8"/><path d="M31.7,470.8 L29.3,473.3" stroke="#222" stroke-width="0.9"/>
<text x="42.5" y="473.6" font-size="7.5" fill="#222" font-weight="normal" text-anchor="start" textLength="15" lengthAdjust="spacingAndGlyphs" >搜索</text>
<rect x="125" y="462.5" width="33.8" height="17.5" rx="1.5" fill="#DCDCDE"/>
<defs><linearGradient id="bc" x1="0" y1="0" x2="0" y2="1"><stop offset="0" stop-color="#F09A10"/><stop offset="0.55" stop-color="#D88200"/><stop offset="0.7" stop-color="#A86000"/><stop offset="1" stop-color="#D07A00"/></linearGradient></defs>
<path d="M139.5,466.2 Q139.5,464 142,464 Q144.5,464 144.5,466.2" fill="none" stroke="#3A3A3A" stroke-width="1"/><rect x="135" y="466" width="14" height="10" rx="0.8" fill="url(#bc)"/><rect x="141.2" y="470" width="1.8" height="2.3" fill="#FFE040"/>
<rect x="169" y="467" width="2.2" height="1" fill="#DDE"/><rect x="169" y="470" width="2.2" height="1" fill="#DDE"/><rect x="169" y="473" width="2.2" height="1" fill="#DDE"/><rect x="172.5" y="466.5" width="4.3" height="3.5" fill="none" stroke="#DDE" stroke-width="0.8"/><rect x="172.5" y="471.2" width="4.3" height="3.3" fill="none" stroke="#DDE" stroke-width="0.8"/>
<defs><linearGradient id="edg" x1="0" y1="0" x2="1" y2="1"><stop offset="0" stop-color="#30C8A0"/><stop offset="0.45" stop-color="#1A9AD8"/><stop offset="1" stop-color="#0C5AB0"/></linearGradient></defs>
<circle cx="197.3" cy="470" r="6.2" fill="url(#edg)"/>
<path d="M193.5,471 Q194,466.5 198,466.3 Q201.5,466.3 202.2,469.5 L197,470.2 Q197.5,473.5 201,474.3 Q197,476.5 194.5,474.2 Q193.3,473 193.5,471 Z" fill="#20323F" opacity="0.55"/>
<path d="M191.5,468 Q193,463.8 197.5,463.8 Q202,464 203.4,468.5" fill="none" stroke="#40D890" stroke-width="1.6" opacity="0.8"/>
<rect x="215" y="465.5" width="11.3" height="10.5" fill="#F4C042"/><rect x="215" y="465.5" width="5" height="2" fill="#E0A020"/><rect x="217.5" y="471" width="6.3" height="5" fill="#3A7AD0"/>
<rect x="238.8" y="464.5" width="11.5" height="11.5" rx="1.5" fill="#2A1A1A"/><path d="M241.5,466.5 L248.5,470.3 L241.5,474 Z" fill="#E8202A"/>
<rect x="256" y="460.5" width="22.8" height="19.5" fill="#3A4856"/>
<circle cx="268" cy="470" r="5.6" fill="#E8491D"/><path d="M265.6,472.5 L268,467.2 L270.4,472.5 M266.5,470.8 L269.5,470.8" stroke="#fff" stroke-width="1" fill="none"/>
<rect x="188" y="479" width="19" height="1" fill="#7AA8D8"/><rect x="211" y="479" width="19" height="1" fill="#7AA8D8"/><rect x="235" y="479" width="19" height="1" fill="#7AA8D8"/><rect x="257" y="479" width="21" height="1" fill="#9AC8F0"/>
<path d="M473.6,473.5 Q473,469.5 476.5,469.3 Q478,465.8 482,467.5 Q485.5,468 485.3,471 Q486,473.5 483,473.5 Z" fill="#B8C8E8"/><circle cx="482.4" cy="467" r="2.2" fill="#E02020"/><rect x="482.1" y="465.8" width="0.6" height="2.4" fill="#fff"/>
<text x="489" y="473.4" font-size="7" fill="#F2F2F2" font-weight="normal" text-anchor="start" textLength="26.4" lengthAdjust="spacingAndGlyphs" >18°C 阴</text>
<path d="M529.5,472 L532.6,468.8 L535.7,472" fill="none" stroke="#EEE" stroke-width="0.9"/>
<rect x="545.5" y="465.8" width="3.5" height="6" rx="1.7" fill="#DDD"/><path d="M544,471 Q547.2,474.5 550.5,471 M547.2,473 L547.2,475" stroke="#DDD" stroke-width="0.7" fill="none"/>
<path d="M559.5,468 L565.5,468 M559.5,471.8 L565.5,471.8" stroke="#EEE" stroke-width="0.8"/><rect x="561" y="466.8" width="1.5" height="2.4" fill="#EEE"/><rect x="563" y="470.6" width="1.5" height="2.4" fill="#EEE"/>
<path d="M573.5,466.5 L573.5,473 M579.5,466.5 L579.5,473 M574,470 L579,470" stroke="#EEE" stroke-width="0.9"/><rect x="575.5" y="468.5" width="2" height="3" fill="#EEE"/>
<rect x="590" y="467" width="8" height="5" fill="none" stroke="#EEE" stroke-width="0.8"/><rect x="591" y="468" width="5" height="3" fill="#EEE"/><rect x="588.5" y="468.5" width="1" height="2" fill="#EEE"/>
<path d="M606,474 Q606,468 612.5,467 M608,474 Q608,470 612.5,469.5 M610,474 Q610,472 612.5,471.5" fill="none" stroke="#CCC" stroke-width="0.7"/><path d="M605.5,474.3 L612.6,467" stroke="#DDD" stroke-width="0.6"/>
<path d="M620,468.5 L622,468.5 L624.5,466 L624.5,474 L622,471.5 L620,471.5 Z" fill="none" stroke="#EEE" stroke-width="0.8"/><path d="M626,468 Q627.5,470 626,472 M627.5,466.8 Q629.6,470 627.5,473.2" fill="none" stroke="#EEE" stroke-width="0.7"/>
<text x="633.3" y="473.4" font-size="7.5" fill="#F2F2F2" font-weight="normal" text-anchor="start" textLength="7.2" lengthAdjust="spacingAndGlyphs" >中</text>
<path d="M647.8,466.5 L651.2,465.2 L654.6,466.5 L654.6,470 Q654.6,474 651.2,475 Q647.8,474 647.8,470 Z" fill="#2A7AE0"/><path d="M649.8,468.2 L652.6,468.2 L649.8,472 L652.6,472" fill="none" stroke="#fff" stroke-width="0.7"/>
<text x="677.5" y="469.5" font-size="6.3" fill="#F2F2F2" font-weight="normal" text-anchor="middle" textLength="17" lengthAdjust="spacingAndGlyphs" >12:55</text>
<text x="676.5" y="477" font-size="6.3" fill="#F2F2F2" font-weight="normal" text-anchor="middle" textLength="27" lengthAdjust="spacingAndGlyphs" >2024/3/31</text>
<path d="M700.5,465.8 L708.2,465.8 L708.2,472 L704.5,472 L702.5,474 L702.5,472 L700.5,472 Z" fill="none" stroke="#EEE" stroke-width="0.8"/>
<rect x="716.4" y="460.5" width="0.6" height="19.5" fill="#5A6A78"/>
</svg>
</body></html>
